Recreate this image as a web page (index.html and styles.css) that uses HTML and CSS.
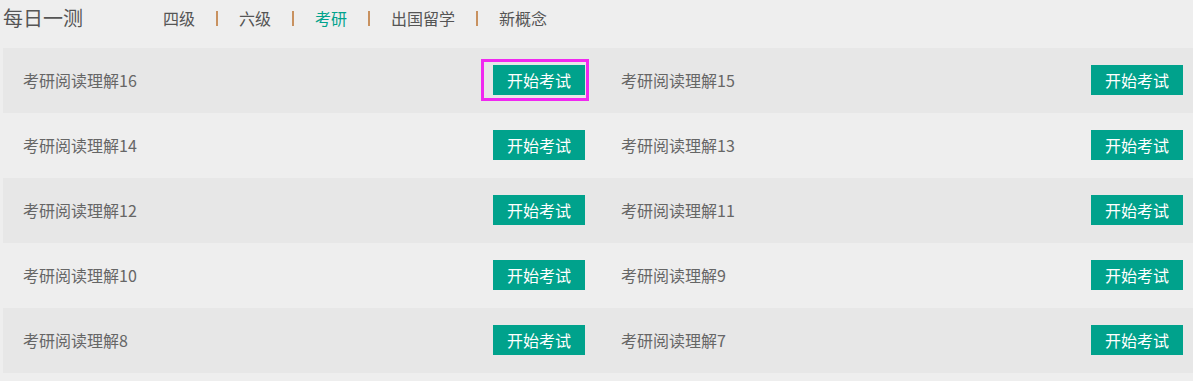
FILE: index.html
```html
<!DOCTYPE html>
<html lang="zh-CN">
<head>
    <meta charset="UTF-8">
    <meta name="viewport" content="width=device-width, initial-scale=1.0">
    <title>每日一测 - 考研</title>
    <link rel="stylesheet" href="styles.css">
</head>
<body>
    <div class="page">
        <!-- 顶部导航 -->
        <header class="top">
            <h1 class="title">每日一测</h1>
            <nav class="tabs">
                <a class="tab">四级</a>
                <span class="sep"></span>
                <a class="tab">六级</a>
                <span class="sep"></span>
                <a class="tab active">考研</a>
                <span class="sep"></span>
                <a class="tab">出国留学</a>
                <span class="sep"></span>
                <a class="tab">新概念</a>
            </nav>
        </header>

        <!-- 试卷列表 -->
        <ul class="exam-list">
            <li class="exam-row">
                <div class="exam"><span class="exam-name">考研阅读理解16</span><span class="start-wrap"><button class="start">开始考试</button><span class="focus-mark"></span></span></div>
                <div class="exam"><span class="exam-name">考研阅读理解15</span><button class="start">开始考试</button></div>
            </li>
            <li class="exam-row">
                <div class="exam"><span class="exam-name">考研阅读理解14</span><button class="start">开始考试</button></div>
                <div class="exam"><span class="exam-name">考研阅读理解13</span><button class="start">开始考试</button></div>
            </li>
            <li class="exam-row">
                <div class="exam"><span class="exam-name">考研阅读理解12</span><button class="start">开始考试</button></div>
                <div class="exam"><span class="exam-name">考研阅读理解11</span><button class="start">开始考试</button></div>
            </li>
            <li class="exam-row">
                <div class="exam"><span class="exam-name">考研阅读理解10</span><button class="start">开始考试</button></div>
                <div class="exam"><span class="exam-name">考研阅读理解9</span><button class="start">开始考试</button></div>
            </li>
            <li class="exam-row">
                <div class="exam"><span class="exam-name">考研阅读理解8</span><button class="start">开始考试</button></div>
                <div class="exam"><span class="exam-name">考研阅读理解7</span><button class="start">开始考试</button></div>
            </li>
        </ul>
    </div>
</body>
</html>
```

FILE: styles.css
```css
/* 颜色 */
:root {
    --bg: #eeeeee;
    --band: #e7e7e7;
    --text: #666666;
    --green: #00a28c;
    --sep: #c8915f;
    --font: "Microsoft YaHei", "Noto Sans CJK SC", sans-serif;
}

* {
    margin: 0;
    padding: 0;
    box-sizing: border-box;
}

body {
    background-color: var(--bg);
    font-family: var(--font);
    color: var(--text);
    overflow: hidden;
}

.page {
    width: 1196px;
    margin-left: 3px;
}

/* 顶部导航 */
.top {
    display: flex;
    align-items: center;
    height: 37px;
    padding-bottom: 2px;
}

.title {
    font-size: 20px;
    font-weight: normal;
    color: #555;
    width: 160px;
}

.tabs {
    display: flex;
    align-items: center;
    font-size: 16px;
}

.tab {
    color: #555;
    cursor: pointer;
}

.tab.active {
    color: var(--green);
}

.sep {
    display: inline-block;
    width: 2px;
    height: 15px;
    margin: 2px 21px 0 21px;
    background-color: var(--sep);
}

/* 列表 */
.exam-list {
    list-style: none;
    margin-top: 11px;
}

.exam-row {
    display: flex;
    height: 65px;
}

.exam-row:nth-child(odd) {
    background-color: var(--band);
}

.exam {
    flex: 1;
    display: flex;
    align-items: center;
    justify-content: space-between;
    padding: 0 16px 2px 20px;
}

.exam-name {
    font-size: 16px;
    color: var(--text);
}

.start-wrap {
    position: relative;
    display: flex;
}

.start {
    background-color: var(--green);
    color: #fff;
    border: none;
    font-family: var(--font);
    font-size: 16px;
    width: 92px;
    height: 30px;
    cursor: pointer;
}

/* 选中框 */
.focus-mark {
    position: absolute;
    left: -12px;
    top: -6px;
    right: -4px;
    bottom: -6px;
    border: 3px solid #f028f0;
    pointer-events: none;
}
```
